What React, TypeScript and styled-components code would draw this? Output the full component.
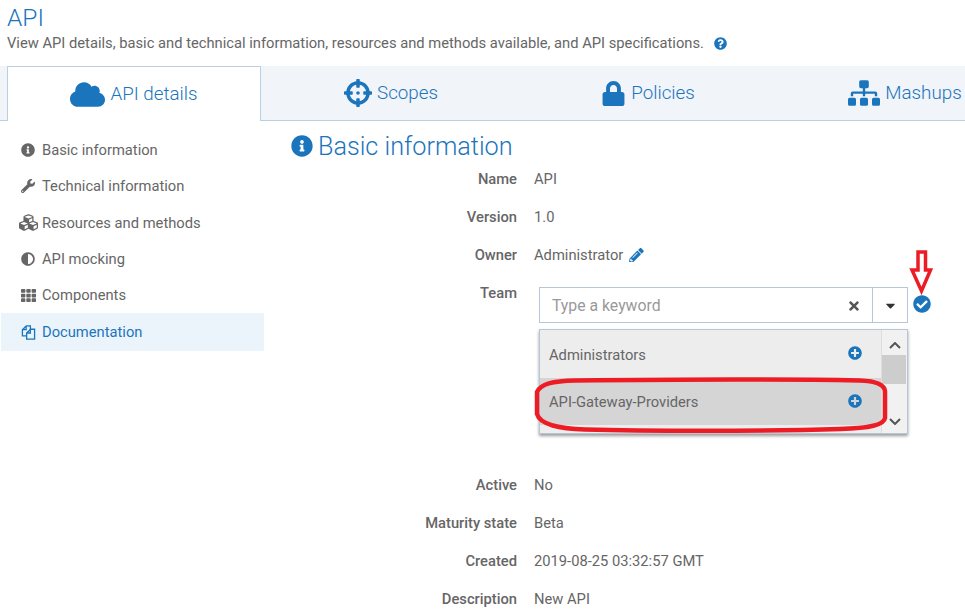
import React from "react";
import styled, { createGlobalStyle } from "styled-components";
import {
  FaAdjust,
  FaCaretDown,
  FaCheckCircle,
  FaCloud,
  FaCrosshairs,
  FaCubes,
  FaInfoCircle,
  FaLock,
  FaPencilAlt,
  FaPlusCircle,
  FaQuestionCircle,
  FaSitemap,
  FaTh,
  FaTimes,
  FaWrench,
} from "react-icons/fa";

const GlobalStyle = createGlobalStyle`
  html, body {
    margin: 0;
    padding: 0;
    background: #fff;
    overflow: hidden;
  }
  body {
    font-family: Roboto, "Liberation Sans", sans-serif;
    color: #666;
  }
`;

const Page = styled.div`
  position: relative;
  width: 965px;
  height: 612px;
  overflow: hidden;
`;

const Header = styled.div`
  height: 66px;
  padding-left: 7px;
`;

const Title = styled.h1`
  margin: 0;
  padding-top: 4px;
  font-size: 24.5px;
  line-height: 27px;
  font-weight: 300;
  color: #1b75bc;
`;

const Subtitle = styled.p`
  margin: 0;
  padding-top: 3px;
  font-size: 14.73px;
  line-height: 18px;
  color: #666;
  display: flex;
  align-items: center;
  svg {
    margin-left: 10px;
    color: #1b75bc;
    font-size: 13px;
  }
`;

const TabBar = styled.div`
  display: flex;
  height: 55px;
  padding-left: 7px;
  gap: 3px;
  background: #f1f4f8;
  border-bottom: 1px solid #b9cfe2;
  box-sizing: border-box;
`;

const Tab = styled.div<{ $active?: boolean }>`
  flex: 0 0 254px;
  box-sizing: border-box;
  height: ${(p) => (p.$active ? "55px" : "54px")};
  display: flex;
  align-items: center;
  justify-content: center;
  gap: 5px;
  font-size: 18.8px;
  font-weight: 300;
  color: #1b75bc;
  background: ${(p) => (p.$active ? "#fff" : "transparent")};
  border: ${(p) => (p.$active ? "1px solid #b9cfe2" : "0")};
  border-bottom: 0;
  white-space: nowrap;
`;

const TabIcon = styled.span<{ $size: number }>`
  display: flex;
  font-size: ${(p) => p.$size}px;
`;

const Body = styled.div`
  display: flex;
`;

const Sidebar = styled.nav`
  flex: 0 0 263px;
  margin-left: 1px;
  padding-top: 10.6px;
`;

const NavItem = styled.div<{ $active?: boolean }>`
  height: ${(p) => (p.$active ? "38px" : "36.4px")};
  margin-top: ${(p) => (p.$active ? "-0.4px" : "0")};
  display: flex;
  align-items: center;
  padding-left: 20px;
  gap: 7px;
  font-size: 14.73px;
  color: ${(p) => (p.$active ? "#1b75bc" : "#666")};
  background: ${(p) => (p.$active ? "#ebf4fb" : "transparent")};
`;

const NavIcon = styled.span<{ $size?: number }>`
  flex: 0 0 14px;
  width: 14px;
  min-width: 0;
  display: flex;
  justify-content: center;
  font-size: ${(p) => p.$size ?? 14}px;
  svg {
    flex-shrink: 0;
  }
`;

const Main = styled.main`
  flex: 1;
  padding-left: 27px;
`;

const SectionTitle = styled.h2`
  margin: 0;
  height: 30px;
  margin-bottom: -1px;
  padding-top: 10px;
  display: flex;
  align-items: center;
  gap: 5px;
  font-size: 25.2px;
  font-weight: 300;
  color: #1b75bc;
  svg {
    font-size: 22px;
  }
`;

const Row = styled.div<{ $tall?: boolean }>`
  display: flex;
  height: ${(p) => (p.$tall ? "192px" : "38px")};
  font-size: 14.73px;
  line-height: 38px;
`;

const Label = styled.div`
  flex: 0 0 226px;
  text-align: right;
  font-weight: 500;
  color: #666;
`;

const Value = styled.div`
  padding-left: 17px;
  display: flex;
  align-items: center;
  height: 38px;
  gap: 6px;
  svg {
    color: #1b75bc;
  }
`;

const Editor = styled.div`
  position: relative;
  margin-left: 22px;
  padding-top: 13px;
  width: 369px;
`;

const Combo = styled.div`
  display: flex;
  align-items: center;
  box-sizing: border-box;
  height: 36px;
  border: 1px solid #b4c8da;
`;

const ComboInput = styled.div`
  flex: 1;
  padding: 1px 0 0 12px;
  font-size: 15.8px;
  line-height: 32px;
  color: #999;
`;

const ComboClear = styled.span`
  display: flex;
  padding: 2px 11px 0 0;
  font-size: 14px;
  color: #555;
`;

const ComboToggle = styled.span`
  flex: 0 0 34px;
  height: 34px;
  display: flex;
  align-items: center;
  justify-content: center;
  border-left: 1px solid #b4c8da;
  font-size: 15px;
  color: #333;
`;

const Confirm = styled.span`
  position: absolute;
  left: 374px;
  top: 21px;
  display: flex;
  font-size: 18px;
  color: #1b75bc;
`;

const ListBox = styled.div`
  position: absolute;
  left: 0;
  top: 55px;
  width: 369px;
  height: 105px;
  box-sizing: border-box;
  display: flex;
  border: 1px solid #b4c8da;
  box-shadow: 0 2px 3px rgba(0, 0, 0, 0.4);
  background: #fff;
`;

const ListItems = styled.div`
  flex: 1;
  background: #ededed;
`;

const ListItem = styled.div<{ $hover?: boolean }>`
  display: flex;
  align-items: center;
  justify-content: space-between;
  box-sizing: border-box;
  height: ${(p) => (p.$hover ? "47px" : "48px")};
  padding: ${(p) => (p.$hover ? "0" : "2px")} 19px 0 9px;
  font-size: 14.73px;
  background: ${(p) => (p.$hover ? "#d5d5d5" : "#ededed")};
  svg {
    font-size: 14px;
    color: #1b75bc;
    margin-top: ${(p) => (p.$hover ? "-1px" : "-5px")};
  }
`;

const Scrollbar = styled.div`
  flex: 0 0 26px;
  display: flex;
  flex-direction: column;
  align-items: center;
  justify-content: space-between;
  padding: 12px 0 8px;
  box-sizing: border-box;
  background: #f1f1f1;
  border-left: 1px solid #ddd;
`;

const ScrollThumb = styled.div`
  position: absolute;
  right: 1px;
  top: 25px;
  width: 24px;
  height: 29px;
  background: #cdcdcd;
`;

const Annotation = styled.svg`
  position: absolute;
  left: 0;
  top: 0;
  pointer-events: none;
`;

const details = [
  ["Name", "API"],
  ["Version", "1.0"],
];
const tail = [
  ["Active", "No"],
  ["Maturity state", "Beta"],
  ["Created", "2019-08-25 03:32:57 GMT"],
  ["Description", "New API"],
];

const FilesIcon = () => (
  <svg width="15" height="15" viewBox="0 0 16 16" fill="none" stroke="currentColor" strokeWidth="1.4">
    <path d="M5.5 1H10V4.5M5.5 1L1.5 5V11.5H6" />
    <path d="M5.5 1V5H1.5" />
    <path d="M10 4.5H14.5V15H6V8.5L10 4.5V8.5H6" />
  </svg>
);

const ScrollArrow = ({ down }: { down?: boolean }) => (
  <svg width="12" height="7" viewBox="0 0 12 7" fill="none" stroke="#555" strokeWidth="2">
    <polyline points={down ? "1,1 6,6 11,1" : "1,6 6,1 11,6"} />
  </svg>
);

export default function App() {
  return (
    <Page>
      <GlobalStyle />
      <Header>
        <Title>API</Title>
        <Subtitle>
          View API details, basic and technical information, resources and methods available, and API specifications.
          <FaQuestionCircle />
        </Subtitle>
      </Header>
      <TabBar>
        <Tab $active>
          <TabIcon $size={35}><FaCloud /></TabIcon> API details
        </Tab>
        <Tab>
          <TabIcon $size={28}><FaCrosshairs /></TabIcon> Scopes
        </Tab>
        <Tab>
          <TabIcon $size={25}><FaLock /></TabIcon> Policies
        </Tab>
        <Tab>
          <TabIcon $size={32}><FaSitemap /></TabIcon> Mashups
        </Tab>
      </TabBar>
      <Body>
        <Sidebar>
          <NavItem><NavIcon><FaInfoCircle /></NavIcon>Basic information</NavItem>
          <NavItem><NavIcon><FaWrench /></NavIcon>Technical information</NavItem>
          <NavItem><NavIcon $size={19}><FaCubes /></NavIcon>Resources and methods</NavItem>
          <NavItem><NavIcon><FaAdjust /></NavIcon>API mocking</NavItem>
          <NavItem><NavIcon $size={15}><FaTh /></NavIcon>Components</NavItem>
          <NavItem $active><NavIcon><FilesIcon /></NavIcon>Documentation</NavItem>
        </Sidebar>
        <Main>
          <SectionTitle>
            <FaInfoCircle /> Basic information
          </SectionTitle>
          {details.map(([k, v]) => (
            <Row key={k}>
              <Label>{k}</Label>
              <Value>{v}</Value>
            </Row>
          ))}
          <Row>
            <Label>Owner</Label>
            <Value>Administrator <FaPencilAlt /></Value>
          </Row>
          <Row $tall>
            <Label>Team</Label>
            <Editor>
              <Combo>
                <ComboInput>Type a keyword</ComboInput>
                <ComboClear><FaTimes /></ComboClear>
                <ComboToggle><FaCaretDown /></ComboToggle>
              </Combo>
              <Confirm><FaCheckCircle /></Confirm>
              <ListBox>
                <ListItems>
                  <ListItem>Administrators <FaPlusCircle /></ListItem>
                  <ListItem $hover>API-Gateway-Providers <FaPlusCircle /></ListItem>
                </ListItems>
                <Scrollbar>
                  <ScrollArrow />
                  <ScrollArrow down />
                </Scrollbar>
                <ScrollThumb />
              </ListBox>
            </Editor>
          </Row>
          {tail.map(([k, v]) => (
            <Row key={k}>
              <Label>{k}</Label>
              <Value>{v}</Value>
            </Row>
          ))}
        </Main>
      </Body>
      <Annotation width="965" height="612" viewBox="0 0 965 612">
        <path
          d="M537 392 C541 384 552 381 575 380.5 C660 379.5 780 379 860 380.5 C874 381 884 384 885 391 L885 418 C884 425 870 428 840 429 C760 431.5 640 431 585 429.5 C560 428.5 540 425 537 414 Z"
          fill="none"
          stroke="#ed1c24"
          strokeWidth="4.5"
        />
        <path
          d="M918 252 L925.5 252 L925.5 270 L930.5 270 L921.5 291 L912 270 L918 270 Z"
          fill="none"
          stroke="#ed1c24"
          strokeWidth="3.5"
        />
      </Annotation>
    </Page>
  );
}
